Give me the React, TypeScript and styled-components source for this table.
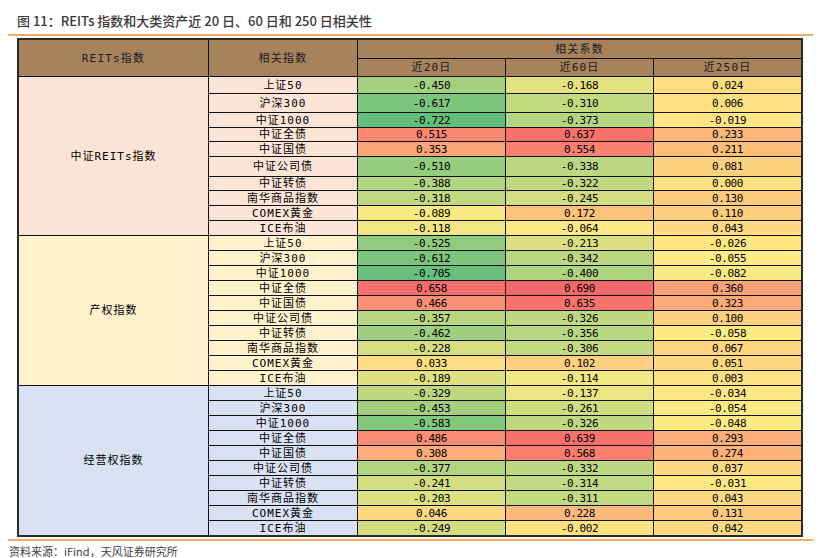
import React from 'react';
import styled, { createGlobalStyle } from 'styled-components';

const Global = createGlobalStyle`
  html, body { margin: 0; padding: 0; background: #ffffff; }
  body { font-family: "Noto Sans CJK SC", sans-serif; }
`;

const NAMES = ['上证50', '沪深300', '中证1000', '中证全债', '中证国债', '中证公司债', '中证转债', '南华商品指数', 'COMEX黄金', 'ICE布油'];

type Group = { label: string; bg: string; values: number[][] };

const GROUPS: Group[] = [
  {
    label: '中证REITs指数',
    bg: '#FCE4D6',
    values: [
      [-0.45, -0.168, 0.024],
      [-0.617, -0.31, 0.006],
      [-0.722, -0.373, -0.019],
      [0.515, 0.637, 0.233],
      [0.353, 0.554, 0.211],
      [-0.51, -0.338, 0.081],
      [-0.388, -0.322, 0.0],
      [-0.318, -0.245, 0.13],
      [-0.089, 0.172, 0.11],
      [-0.118, -0.064, 0.043],
    ],
  },
  {
    label: '产权指数',
    bg: '#FFF2CC',
    values: [
      [-0.525, -0.213, -0.026],
      [-0.612, -0.342, -0.055],
      [-0.705, -0.4, -0.082],
      [0.658, 0.69, 0.36],
      [0.466, 0.635, 0.323],
      [-0.357, -0.326, 0.1],
      [-0.462, -0.356, -0.058],
      [-0.228, -0.306, 0.067],
      [0.033, 0.102, 0.051],
      [-0.189, -0.114, 0.003],
    ],
  },
  {
    label: '经营权指数',
    bg: '#D9E1F2',
    values: [
      [-0.329, -0.137, -0.034],
      [-0.453, -0.261, -0.054],
      [-0.583, -0.326, -0.048],
      [0.486, 0.639, 0.293],
      [0.308, 0.568, 0.274],
      [-0.377, -0.332, 0.037],
      [-0.241, -0.314, -0.031],
      [-0.203, -0.311, 0.043],
      [0.046, 0.228, 0.131],
      [-0.249, -0.002, 0.042],
    ],
  },
];

const ALL = GROUPS.flatMap((g) => g.values.flat()).sort((a, b) => a - b);
const MIN = ALL[0];
const MAX = ALL[ALL.length - 1];
const midPos = (ALL.length - 1) * 0.5;
const MID = ALL[Math.floor(midPos)] + (ALL[Math.ceil(midPos)] - ALL[Math.floor(midPos)]) * (midPos - Math.floor(midPos));

const GREEN = [99, 190, 123];
const YELLOW = [255, 235, 132];
const RED = [248, 105, 107];

function mix(a: number[], b: number[], t: number) {
  const c = a.map((v, i) => Math.round(v + (b[i] - v) * t));
  return `rgb(${c[0]}, ${c[1]}, ${c[2]})`;
}

function scaleColor(v: number) {
  if (v <= MID) return mix(GREEN, YELLOW, (v - MIN) / (MID - MIN));
  return mix(YELLOW, RED, (v - MID) / (MAX - MID));
}

const fmt = (v: number) => v.toFixed(3);

const Page = styled.div`
  width: 805px;
  margin-left: 8px;
  display: flex;
  flex-direction: column;
`;

const Title = styled.h1`
  margin: 0;
  padding: 11px 0 0 9px;
  font-family: "Noto Sans CJK SC", sans-serif;
  font-size: 13px;
  line-height: 20px;
  font-weight: 500;
  color: #3a3a3a;
`;

const Rule = styled.div<{ $gap: number }>`
  height: 2px;
  margin-top: ${(p) => p.$gap}px;
  background: #f5aa6c;
`;

const Table = styled.div`
  align-self: flex-start;
  margin: 2px 0 0 9px;
  display: grid;
  grid-template-columns: 189px 148px 147px 147px 147px;
  grid-template-rows: 18px 17px 16px 18px 14px 13px 14px 19px 13px 14px 14px 14px repeat(20, 14px);
  gap: 1px;
  background: #111111;
  border: 2px solid #2a2a2a;
  font-family: "DejaVu Sans Mono", "Noto Sans CJK SC", monospace;
  color: #000000;
`;

const CellBase = styled.div`
  display: flex;
  align-items: center;
  justify-content: center;
  line-height: 1;
  white-space: nowrap;
  overflow: hidden;
`;

const HeadCell = styled(CellBase)<{ $rows?: number; $cols?: number }>`
  grid-row: span ${(p) => p.$rows ?? 1};
  grid-column: span ${(p) => p.$cols ?? 1};
  background: #a6825d;
  color: #1c1c1c;
  font-size: 11px;
  letter-spacing: 1.2px;
`;

const GroupCell = styled(CellBase)<{ $bg: string }>`
  grid-row: span 10;
  background: ${(p) => p.$bg};
  font-size: 11px;
  letter-spacing: 1px;
`;

const NameCell = styled(CellBase)<{ $bg: string }>`
  background: ${(p) => p.$bg};
  font-size: 11px;
  letter-spacing: 1px;
`;

const ValueCell = styled(CellBase)<{ $bg: string }>`
  background: ${(p) => p.$bg};
  font-size: 11px;
  letter-spacing: -0.4px;
`;

const Footer = styled.div`
  margin-top: 3px;
  padding-left: 1px;
  font-family: "Noto Sans CJK SC", sans-serif;
  font-size: 11px;
  line-height: 14px;
  color: #404040;
`;

export default function App() {
  return (
    <>
      <Global />
      <Page>
        <Title>图 11：REITs 指数和大类资产近 20 日、60 日和 250 日相关性</Title>
        <Rule $gap={3} />
        <Table>
          <HeadCell $rows={2}>REITs指数</HeadCell>
          <HeadCell $rows={2}>相关指数</HeadCell>
          <HeadCell $cols={3}>相关系数</HeadCell>
          <HeadCell>近20日</HeadCell>
          <HeadCell>近60日</HeadCell>
          <HeadCell>近250日</HeadCell>
          {GROUPS.map((g) => (
            <React.Fragment key={g.label}>
              <GroupCell $bg={g.bg}>{g.label}</GroupCell>
              {g.values.map((row, i) => (
                <React.Fragment key={NAMES[i]}>
                  <NameCell $bg={g.bg}>{NAMES[i]}</NameCell>
                  {row.map((v, j) => (
                    <ValueCell key={j} $bg={scaleColor(v)}>
                      {fmt(v)}
                    </ValueCell>
                  ))}
                </React.Fragment>
              ))}
            </React.Fragment>
          ))}
        </Table>
        <Rule $gap={2} />
        <Footer>资料来源：iFind，天风证券研究所</Footer>
      </Page>
    </>
  );
}
